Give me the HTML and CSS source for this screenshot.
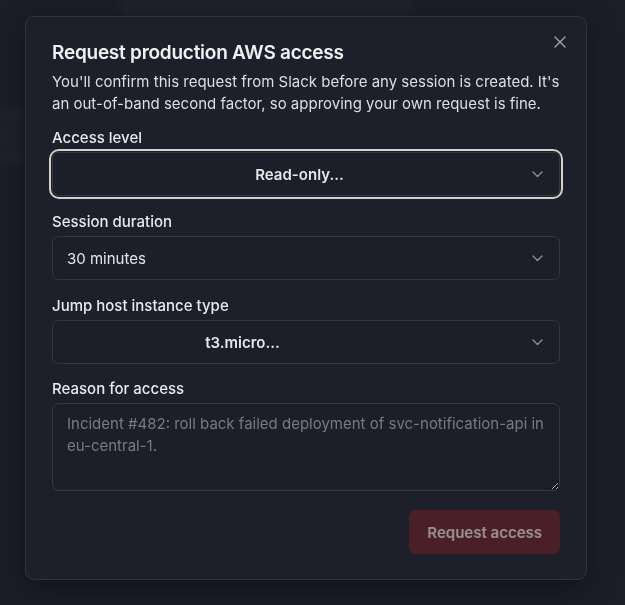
FILE: index.html
```html
<!DOCTYPE html>
<html lang="en">
<head>
<meta charset="utf-8">
<title>Request production AWS access</title>
<link rel="stylesheet" href="styles.css">
</head>
<body>
<div class="page" aria-hidden="true">
  <div class="page-top"></div>
  <div class="page-side">
    <div class="ghost"></div>
    <div class="ghost"></div>
    <div class="ghost"></div>
  </div>
</div>
<div class="overlay">
  <div class="dialog" role="dialog" aria-labelledby="dlg-title">
    <button class="close" aria-label="Close">
      <svg width="12" height="12" viewBox="0 0 12 12"><path d="M1 1L11 11M11 1L1 11" stroke="currentColor" stroke-width="1.4" stroke-linecap="round"/></svg>
    </button>
    <h2 id="dlg-title" class="title">Request production AWS access</h2>
    <p class="desc">You'll confirm this request from Slack before any session is created. It's an out-of-band second factor, so approving your own request is fine.</p>

    <div class="field">
      <div class="label">Access level</div>
      <div class="select focused centered">
        <span class="value">Read-only...</span>
        <svg class="chev" width="11" height="7" viewBox="0 0 11 7"><path d="M1 1L5.5 5.5L10 1" fill="none" stroke="currentColor" stroke-width="1.3" stroke-linecap="round" stroke-linejoin="round"/></svg>
      </div>
    </div>

    <div class="field">
      <div class="label">Session duration</div>
      <div class="select">
        <span class="value">30 minutes</span>
        <svg class="chev" width="11" height="7" viewBox="0 0 11 7"><path d="M1 1L5.5 5.5L10 1" fill="none" stroke="currentColor" stroke-width="1.3" stroke-linecap="round" stroke-linejoin="round"/></svg>
      </div>
    </div>

    <div class="field">
      <div class="label">Jump host instance type</div>
      <div class="select centered narrow">
        <span class="value">t3.micro...</span>
        <svg class="chev" width="11" height="7" viewBox="0 0 11 7"><path d="M1 1L5.5 5.5L10 1" fill="none" stroke="currentColor" stroke-width="1.3" stroke-linecap="round" stroke-linejoin="round"/></svg>
      </div>
    </div>

    <div class="field last">
      <div class="label">Reason for access</div>
      <textarea class="textarea" placeholder="Incident #482: roll back failed deployment of svc-notification-api in eu-central-1."></textarea>
    </div>

    <div class="actions">
      <button class="submit" disabled>Request access</button>
    </div>
  </div>
</div>
</body>
</html>
```

FILE: styles.css
```css
* { box-sizing: border-box; }

html, body {
  margin: 0;
  height: 100%;
}

body {
  background: #1b1d28;
  font-family: Inter, "Noto Sans", "Liberation Sans", sans-serif;
  color: #e6e6ea;
  overflow: hidden;
}

.page {
  position: absolute;
  inset: 0;
  filter: blur(6px);
  opacity: 0.6;
}

.page-top {
  margin: 2px 0 0 120px;
  width: 290px;
  height: 10px;
  background: #2a2d38;
  border-radius: 4px;
}

.page-side {
  margin-top: 100px;
  display: flex;
  flex-direction: column;
  gap: 12px;
  width: 24px;
}

.ghost {
  height: 8px;
  background: #2c2f3a;
  border-radius: 3px;
}

.overlay {
  position: fixed;
  inset: 0;
  padding: 16px 0 0 25px;
}

.dialog {
  position: relative;
  width: 562px;
  background: #1d1f2a;
  border: 1px solid #30333d;
  border-radius: 9px;
  padding: 23px 26px 25px;
  box-shadow: 0 8px 30px rgba(0, 0, 0, 0.35);
}

.close {
  position: absolute;
  top: 15px;
  right: 16px;
  width: 20px;
  height: 20px;
  padding: 0;
  border: 0;
  background: none;
  color: #a3a5ac;
  display: flex;
  align-items: center;
  justify-content: center;
}

.title {
  margin: 0;
  font-size: 19px;
  line-height: 26px;
  font-weight: 600;
  color: #f1f1f4;
  letter-spacing: -0.25px;
}

.desc {
  margin: 5px 0 0;
  font-size: 15px;
  line-height: 22px;
  color: #dedee3;
}

.field {
  margin-top: 13px;
  display: flex;
  flex-direction: column;
  gap: 4px;
}

.field + .field {
  margin-top: 16px;
}

.field + .field.last {
  margin-top: 15px;
}

.label {
  font-size: 15px;
  line-height: 20px;
  font-weight: 500;
  color: #e9e9ed;
}

.select {
  height: 44px;
  border: 1px solid #353843;
  border-radius: 7px;
  background: #1c1e29;
  display: flex;
  align-items: center;
  padding: 0 16px 0 14px;
  font-size: 15px;
  color: #e6e6ea;
}

.select .value {
  flex: 1;
}

.select.centered .value {
  text-align: center;
  font-weight: 600;
}

.select.narrow .value {
  padding-right: 114px;
}

.select.focused {
  box-shadow: 0 0 0 1px #1d1f2a, 0 0 0 3px #d7d0c4;
}

.chev {
  color: #8e9099;
  flex: none;
}

.textarea {
  display: block;
  width: 100%;
  height: 88px;
  resize: vertical;
  border: 1px solid #353843;
  border-radius: 7px;
  background: #1c1e29;
  padding: 9px 14px;
  font-family: inherit;
  font-size: 15px;
  line-height: 22px;
  color: #e6e6ea;
}

.textarea::placeholder {
  color: #777a84;
}

.actions {
  margin-top: 19px;
  display: flex;
  justify-content: flex-end;
}

.submit {
  height: 44px;
  padding: 0 18px;
  border: 0;
  border-radius: 6px;
  background: #4a1f26;
  color: #9a8e92;
  font-family: inherit;
  font-size: 15px;
  font-weight: 600;
}
```
